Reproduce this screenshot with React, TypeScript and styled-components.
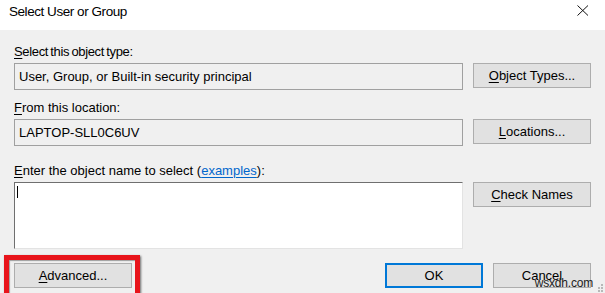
import React from "react";
import styled, { createGlobalStyle } from "styled-components";

const Global = createGlobalStyle`
  html, body { margin: 0; padding: 0; overflow: hidden; }
  body { background: #f0f0f0; }
  #root { width: 605px; height: 293px; overflow: hidden; }
`;

const Dialog = styled.div`
  position: relative;
  width: 605px;
  height: 293px;
  background: #f0f0f0;
  font-family: "Liberation Sans", Arial, sans-serif;
  font-size: 13px;
  color: #000;
  overflow: hidden;
`;

const TitleBar = styled.div`
  height: 30px;
  box-sizing: border-box;
  background: #fff;
  display: flex;
  align-items: flex-start;
  justify-content: space-between;
  padding: 4px 16px 0 9px;
`;

const Title = styled.div`
  font-size: 13.5px;
  line-height: 16px;
  letter-spacing: -0.45px;
  color: #000;
`;

const CloseIcon = styled.svg`
  margin-top: 1px;
  display: block;
`;

const Body = styled.div`
  display: flex;
  flex-direction: column;
  padding: 14px 14px 0 14px;
`;

const Section = styled.div<{ $gap: number }>`
  display: flex;
  flex-direction: column;
  margin-top: ${(p) => p.$gap}px;
`;

const Label = styled.div<{ $tight?: boolean }>`
  line-height: 15px;
  height: 15px;
  margin-bottom: 4px;
  white-space: nowrap;
  word-spacing: ${(p) => (p.$tight ? "-1px" : "0")};
  letter-spacing: ${(p) => (p.$tight ? "-0.35px" : "0")};
`;

const Mn = styled.span`
  text-decoration: underline;
  text-underline-offset: 2px;
  text-decoration-thickness: 1px;
`;

const Link = styled.span`
  color: #0066cc;
  text-decoration: underline;
  text-underline-offset: 2px;
`;

const Row = styled.div`
  display: flex;
  align-items: flex-start;
  gap: 10px;
`;

const ReadOnlyField = styled.div`
  width: 449px;
  height: 27px;
  box-sizing: border-box;
  border: 1px solid #a0a0a0;
  background: #f0f0f0;
  display: flex;
  align-items: center;
  padding: 0 4px;
  white-space: nowrap;
`;

const NameBox = styled.div`
  width: 449px;
  height: 67px;
  box-sizing: border-box;
  background: #fff;
  border-top: 1px solid #6f6f6f;
  border-left: 1px solid #6f6f6f;
  border-right: 1px solid #e3e3e3;
  border-bottom: 1px solid #e3e3e3;
  padding: 3px 2px;
`;

const Caret = styled.div`
  width: 1px;
  height: 12px;
  background: #000;
`;

const Button = styled.div<{ $w?: number; $default?: boolean }>`
  width: ${(p) => p.$w ?? 118}px;
  height: 25px;
  box-sizing: border-box;
  background: #e1e1e1;
  border: ${(p) => (p.$default ? "2px solid #0078d7" : "1px solid #adadad")};
  display: flex;
  align-items: center;
  justify-content: center;
  white-space: nowrap;
  line-height: 15px;
`;

const Footer = styled.div`
  display: flex;
  justify-content: space-between;
  align-items: flex-start;
  margin-top: 14px;
`;

const FooterRight = styled.div`
  display: flex;
  gap: 10px;
`;

const Highlighted = styled.div`
  position: relative;
`;

const RedFrame = styled.div`
  position: absolute;
  left: -10px;
  top: -8px;
  width: 136px;
  height: 60px;
  box-sizing: border-box;
  border: 5px solid #e8141b;
  box-shadow: 1px 1px 2px rgba(0, 0, 0, 0.55), inset 1px 1px 1px rgba(0, 0, 0, 0.35);
  pointer-events: none;
`;

const Watermark = styled.div`
  position: absolute;
  right: 12px;
  bottom: 3px;
  font-size: 12px;
  line-height: 13px;
  color: #1c1c1c;
  letter-spacing: -0.2px;
`;

const Grip = styled.svg`
  position: absolute;
  right: 2px;
  bottom: 1px;
  display: block;
`;

export default function App() {
  return (
    <>
      <Global />
      <Dialog>
        <TitleBar>
          <Title>Select User or Group</Title>
          <CloseIcon width="12" height="11" viewBox="0 0 12 11">
            <path d="M0.5 0.5 L11 10.5 M11 0.5 L0.5 10.5" stroke="#111" strokeWidth="1" fill="none" />
          </CloseIcon>
        </TitleBar>
        <Body>
          <Section $gap={0}>
            <Label $tight>
              <Mn>S</Mn>elect this object type:
            </Label>
            <Row>
              <ReadOnlyField>User, Group, or Built-in security principal</ReadOnlyField>
              <Button>
                <span>
                  <Mn>O</Mn>bject Types...
                </span>
              </Button>
            </Row>
          </Section>
          <Section $gap={10}>
            <Label>
              <Mn>F</Mn>rom this location:
            </Label>
            <Row>
              <ReadOnlyField>LAPTOP-SLL0C6UV</ReadOnlyField>
              <Button>
                <span>
                  <Mn>L</Mn>ocations...
                </span>
              </Button>
            </Row>
          </Section>
          <Section $gap={17}>
            <Label>
              <Mn>E</Mn>nter the object name to select (<Link>examples</Link>):
            </Label>
            <Row>
              <NameBox>
                <Caret />
              </NameBox>
              <Button>
                <span>
                  <Mn>C</Mn>heck Names
                </span>
              </Button>
            </Row>
          </Section>
          <Footer>
            <Highlighted>
              <Button>
                <span>
                  <Mn>A</Mn>dvanced...
                </span>
              </Button>
              <RedFrame />
            </Highlighted>
            <FooterRight>
              <Button $w={98} $default>
                OK
              </Button>
              <Button $w={98}>Cancel</Button>
            </FooterRight>
          </Footer>
        </Body>
        <Watermark>wsxdh.com</Watermark>
        <Grip width="6" height="9" viewBox="0 0 6 9">
          <rect x="4" y="1" width="2" height="2" fill="#b8b8b8" />
          <rect x="4" y="4" width="2" height="2" fill="#b8b8b8" />
          <rect x="1" y="4" width="2" height="2" fill="#b8b8b8" />
          <rect x="4" y="7" width="2" height="2" fill="#b8b8b8" />
          <rect x="1" y="7" width="2" height="2" fill="#b8b8b8" />
        </Grip>
      </Dialog>
    </>
  );
}
